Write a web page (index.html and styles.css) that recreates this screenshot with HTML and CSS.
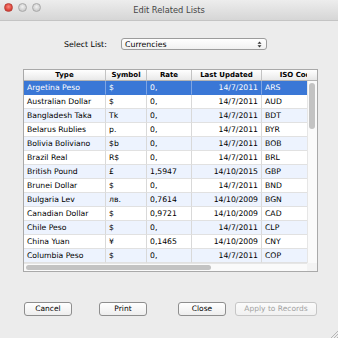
FILE: index.html
```html
<!DOCTYPE html>
<html>
<head>
<meta charset="utf-8">
<link rel="stylesheet" href="styles.css">
</head>
<body>
<div class="window">
  <div class="titlebar">
    <div class="lights">
      <span class="light red"></span>
      <span class="light gray"></span>
      <span class="light gray"></span>
    </div>
    <div class="title">Edit Related Lists</div>
    <div></div>
  </div>

  <div class="selectrow">
    <span class="label">Select List:</span>
    <div class="select"><span>Currencies</span>
      <svg class="updown" width="5" height="7" viewBox="0 0 5 7"><path d="M0.5 2.8 L2.5 0.5 L4.5 2.8 Z M0.5 4.2 L2.5 6.5 L4.5 4.2 Z" fill="#333"/></svg>
    </div>
  </div>

  <div class="frame">
    <div class="top">
      <div class="viewport">
        <div class="row head">
          <div class="c">Type</div>
          <div class="c">Symbol</div>
          <div class="c">Rate</div>
          <div class="c">Last Updated</div>
          <div class="c">ISO Code</div>
        </div>
        <div class="row sel"><div class="c">Argetina Peso</div><div class="c">$</div><div class="c">0,</div><div class="c r">14/7/2011</div><div class="c">ARS</div></div>
        <div class="row"><div class="c">Australian Dollar</div><div class="c">$</div><div class="c">0,</div><div class="c r">14/7/2011</div><div class="c">AUD</div></div>
        <div class="row alt"><div class="c">Bangladesh Taka</div><div class="c">Tk</div><div class="c">0,</div><div class="c r">14/7/2011</div><div class="c">BDT</div></div>
        <div class="row"><div class="c">Belarus Rublies</div><div class="c">p.</div><div class="c">0,</div><div class="c r">14/7/2011</div><div class="c">BYR</div></div>
        <div class="row alt"><div class="c">Bolivia Boliviano</div><div class="c">$b</div><div class="c">0,</div><div class="c r">14/7/2011</div><div class="c">BOB</div></div>
        <div class="row"><div class="c">Brazil Real</div><div class="c">R$</div><div class="c">0,</div><div class="c r">14/7/2011</div><div class="c">BRL</div></div>
        <div class="row alt"><div class="c">British Pound</div><div class="c">£</div><div class="c">1,5947</div><div class="c r">14/10/2015</div><div class="c">GBP</div></div>
        <div class="row"><div class="c">Brunei Dollar</div><div class="c">$</div><div class="c">0,</div><div class="c r">14/7/2011</div><div class="c">BND</div></div>
        <div class="row alt"><div class="c">Bulgaria Lev</div><div class="c">лв.</div><div class="c">0,7614</div><div class="c r">14/10/2009</div><div class="c">BGN</div></div>
        <div class="row"><div class="c">Canadian Dollar</div><div class="c">$</div><div class="c">0,9721</div><div class="c r">14/10/2009</div><div class="c">CAD</div></div>
        <div class="row alt"><div class="c">Chile Peso</div><div class="c">$</div><div class="c">0,</div><div class="c r">14/7/2011</div><div class="c">CLP</div></div>
        <div class="row"><div class="c">China Yuan</div><div class="c">¥</div><div class="c">0,1465</div><div class="c r">14/10/2009</div><div class="c">CNY</div></div>
        <div class="row alt"><div class="c">Columbia Peso</div><div class="c">$</div><div class="c">0,</div><div class="c r">14/7/2011</div><div class="c">COP</div></div>
      </div>
      <div class="side">
        <div class="corner"></div>
        <div class="vtrack"><div class="vthumb"></div></div>
      </div>
    </div>
    <div class="bottom">
      <div class="htrack"><div class="hthumb"></div></div>
      <div class="bcorner"></div>
    </div>
  </div>

  <div class="buttons">
    <button class="btn">Cancel</button>
    <button class="btn print">Print</button>
    <button class="btn close">Close</button>
    <button class="btn apply" disabled>Apply to Records</button>
  </div>

  <svg class="grip" width="8" height="8" viewBox="0 0 8 8">
    <path d="M1 8 L8 1 M4 8 L8 4 M7 8 L8 7" stroke="#a8a8a8" stroke-width="0.8"/>
  </svg>
</div>
</body>
</html>
```

FILE: styles.css
```css
html, body {
  margin: 0;
  padding: 0;
}
body {
  background: #ececec;
  font-family: "DejaVu Sans", "Verdana", sans-serif;
  color: #000;
}
.window {
  width: 338px;
  height: 338px;
  display: flex;
  flex-direction: column;
  overflow: hidden;
  background: #ececec;
}
.titlebar {
  height: 20px;
  flex: none;
  border-bottom: 1px solid #c4c4c4;
  background: linear-gradient(#ededed, #d6d6d6);
  display: grid;
  grid-template-columns: 1fr auto 1fr;
  align-items: center;
}
.lights {
  display: flex;
  gap: 5px;
  padding-left: 4px;
  align-self: start;
  margin-top: 3px;
}
.light {
  width: 9px;
  height: 9px;
  border-radius: 50%;
  box-sizing: border-box;
}
.light.red {
  background: radial-gradient(circle at 50% 40%, #f98b82, #e0443a 60%, #b12d25);
  border: 1px solid #b8443c;
}
.light.gray {
  background: radial-gradient(circle at 50% 40%, #f2f2f2, #cfcfcf 65%, #b9b9b9);
  border: 1px solid #a9a9a9;
}
.title {
  font-size: 8.3px;
  color: #464646;
  margin-top: -1px;
}
.selectrow {
  display: flex;
  align-items: center;
  margin-top: 17px;
  padding-left: 64px;
  gap: 14px;
}
.label {
  font-size: 7.8px;
  width: 43px;
}
.select {
  width: 146px;
  height: 12px;
  box-sizing: border-box;
  border: 1px solid #9c9c9c;
  border-radius: 3px;
  background: linear-gradient(#ffffff, #f1f1f1);
  display: flex;
  justify-content: space-between;
  align-items: center;
  padding: 0 4px 0 3px;
  font-size: 7.8px;
}
.frame {
  margin: 19px 0 0 23px;
  width: 295px;
  height: 203px;
  box-sizing: border-box;
  border: 1px solid #a9a9a9;
  background: #fff;
  display: flex;
  flex-direction: column;
}
.top {
  display: flex;
  height: 193px;
}
.viewport {
  width: 283px;
  overflow: hidden;
}
.row {
  display: grid;
  grid-template-columns: 82px 41px 45px 70px 72px;
  width: 310px;
  height: 14px;
  font-size: 7.7px;
  line-height: 13px;
}
.c {
  box-sizing: border-box;
  border-right: 1px solid #d9d9d9;
  border-bottom: 1px solid #e1e1e1;
  padding: 0 3px;
  white-space: nowrap;
  overflow: hidden;
}
.c.r {
  text-align: right;
}
.row.alt {
  background: #edf3fe;
}
.row.sel {
  background: #3a77d6;
  color: #fff;
}
.row.sel .c {
  border-right-color: #7fa5e3;
  border-bottom-color: #3a77d6;
}
.row.head {
  height: 11px;
  line-height: 10px;
  font-size: 7px;
  font-weight: bold;
  background: linear-gradient(#ffffff, #e7e7e7);
}
.row.head .c {
  text-align: center;
  border-right-color: #c3c3c3;
  border-bottom-color: #b4b4b4;
}
.side {
  width: 10px;
  display: flex;
  flex-direction: column;
}
.corner {
  height: 11px;
  box-sizing: border-box;
  background: linear-gradient(#ffffff, #e7e7e7);
  border-bottom: 1px solid #b4b4b4;
}
.vtrack {
  flex: 1;
  background: #fafafa;
  border-left: 1px solid #e6e6e6;
  padding: 2px 2px 0 1px;
}
.vthumb {
  height: 46px;
  border-radius: 4px;
  background: #c3c3c3;
}
.bottom {
  display: flex;
  height: 8px;
}
.htrack {
  width: 283px;
  box-sizing: border-box;
  background: #fafafa;
  border-top: 1px solid #e6e6e6;
  padding: 1px 0 0 2px;
}
.hthumb {
  width: 185px;
  height: 5px;
  border-radius: 3px;
  background: #c3c3c3;
}
.bcorner {
  width: 10px;
  background: #f3f3f3;
}
.buttons {
  display: flex;
  margin-top: 30px;
  padding-left: 24px;
}
.btn {
  font-family: "DejaVu Sans", "Verdana", sans-serif;
  font-size: 7.5px;
  height: 14px;
  width: 48px;
  padding: 0;
  box-sizing: border-box;
  border: 1px solid #8e8e8e;
  border-radius: 3px;
  background: linear-gradient(#ffffff, #eeeeee);
  color: #000;
  line-height: 12px;
}
.btn.print {
  margin-left: 27px;
}
.btn.close {
  margin-left: 31px;
}
.btn.apply {
  margin-left: 9px;
  width: 82px;
  border-color: #c6c6c6;
  color: #a2a2a2;
  background: linear-gradient(#fbfbfb, #f1f1f1);
}
.grip {
  margin-top: auto;
  align-self: flex-end;
  flex: none;
}
```
